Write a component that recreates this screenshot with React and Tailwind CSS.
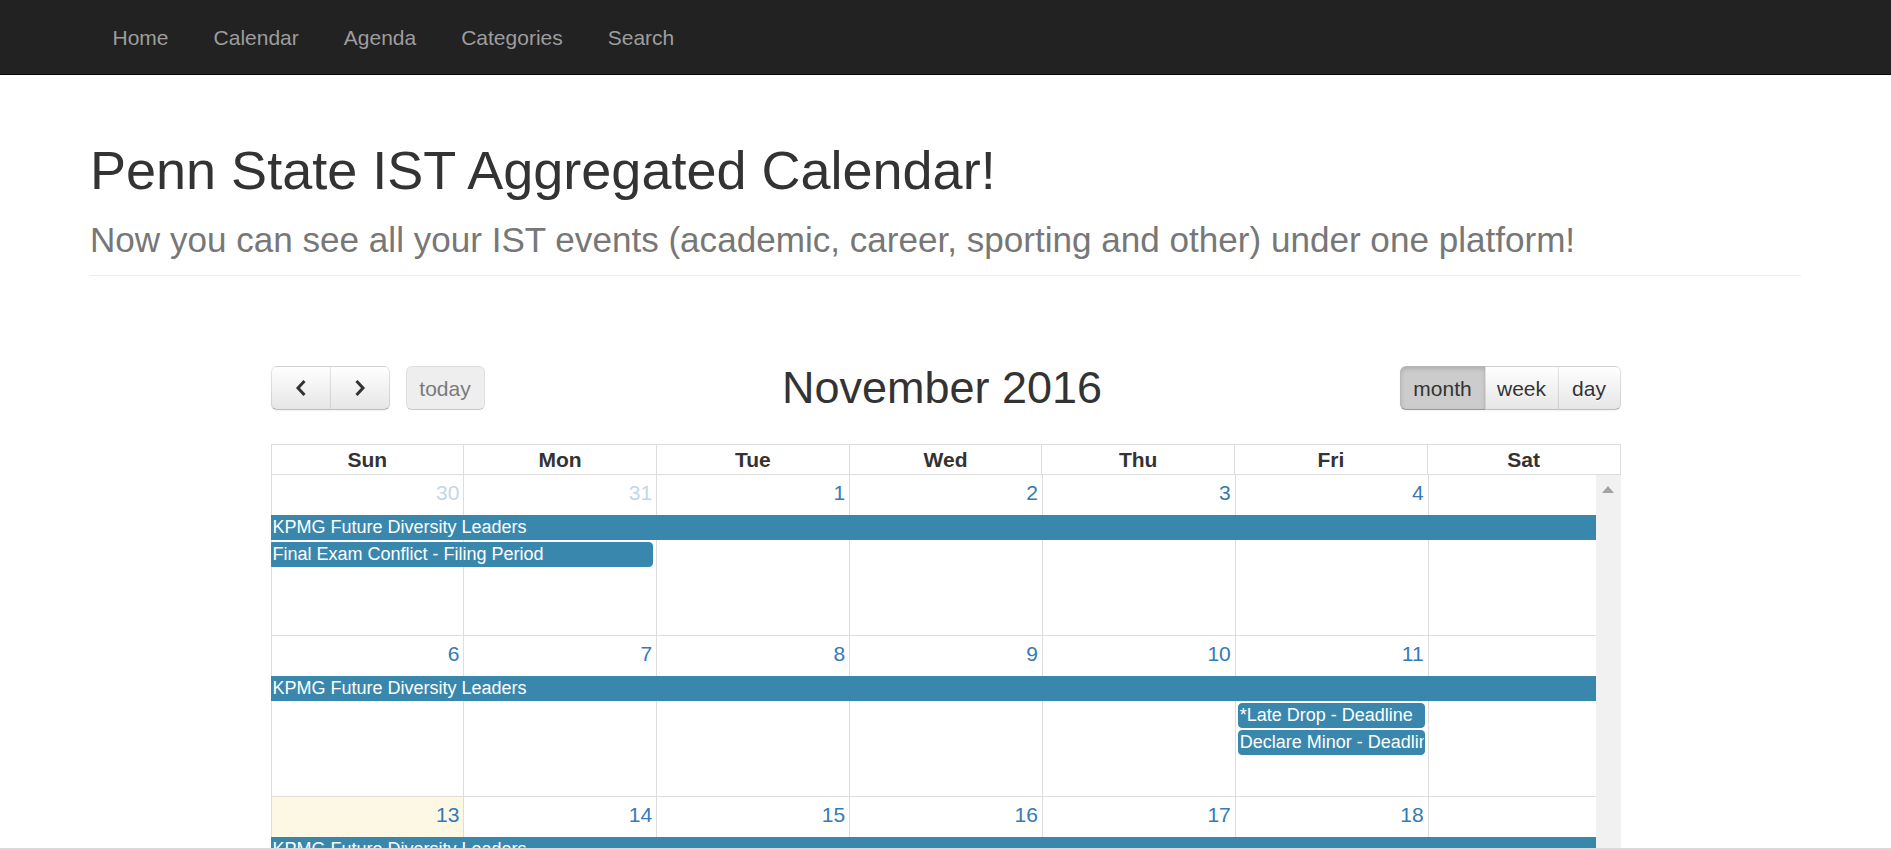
const NAV = ['Home', 'Calendar', 'Agenda', 'Categories', 'Search'];
const DAYS = ['Sun', 'Mon', 'Tue', 'Wed', 'Thu', 'Fri', 'Sat'];

const COL = ['col-start-1', 'col-start-2', 'col-start-3', 'col-start-4', 'col-start-5', 'col-start-6', 'col-start-7'];
const SPAN = ['col-span-1', 'col-span-1', 'col-span-2', 'col-span-3', 'col-span-4', 'col-span-5', 'col-span-6', 'col-span-7'];
const ROW = ['row-start-2', 'row-start-2', 'row-start-3', 'row-start-4'];

// each event: [label, col (1-7), span, row, continuesLeft, continuesRight]
// saturday numbers sit under the scrollbar, so they are left out
const WEEKS = [
  {
    days: [[30, true], [31, true], [1], [2], [3], [4], [null]],
    events: [
      ['KPMG Future Diversity Leaders', 1, 7, 1, true, true],
      ['Final Exam Conflict - Filing Period', 1, 2, 2, true, false],
    ],
  },
  {
    days: [[6], [7], [8], [9], [10], [11], [null]],
    events: [
      ['KPMG Future Diversity Leaders', 1, 7, 1, true, true],
      ['*Late Drop - Deadline', 6, 1, 2, false, false],
      ['Declare Minor - Deadline', 6, 1, 3, false, false],
    ],
  },
  {
    days: [[13, false, true], [14], [15], [16], [17], [18], [null]],
    events: [['KPMG Future Diversity Leaders', 1, 7, 1, true, true]],
  },
  {
    days: [[20], [21], [22], [23], [24], [25], [null]],
    events: [['KPMG Future Diversity Leaders', 1, 7, 1, true, true]],
  },
];

const btnBase =
  'h-[44px] flex items-center justify-center text-[21px] text-[#333] border border-black/10 border-b-black/25';
const btnDefault =
  'bg-linear-to-b from-white to-[#e6e6e6] shadow-[inset_0_1px_0_rgba(255,255,255,0.2),0_1px_2px_rgba(0,0,0,0.05)] [text-shadow:0_1px_1px_rgba(255,255,255,0.75)]';

function Chevron({ dir }) {
  return (
    <svg width="12" height="18" viewBox="0 0 12 18">
      <polyline
        points={dir === 'left' ? '9.5,2 3,9 9.5,16' : '2.5,2 9,9 2.5,16'}
        fill="none"
        stroke="#333"
        strokeWidth="3"
      />
    </svg>
  );
}

function Toolbar() {
  return (
    <div className="flex items-center h-[44px] mb-[34px]">
      <div className="flex">
        <button className={`${btnBase} ${btnDefault} w-[60px] rounded-l-[6px]`}>
          <Chevron dir="left" />
        </button>
        <button className={`${btnBase} ${btnDefault} w-[60px] -ml-px rounded-r-[6px]`}>
          <Chevron dir="right" />
        </button>
        <button className={`${btnBase} ml-[16px] w-[79px] rounded-[6px] bg-[#e6e6e6] opacity-65`}>
          today
        </button>
      </div>
      <h2 className="flex-1 text-center text-[45px] leading-[50px] text-[#333]">November 2016</h2>
      <div className="flex">
        <button className={`${btnBase} w-[86px] rounded-l-[6px] bg-[#cccccc] shadow-[inset_0_2px_4px_rgba(0,0,0,0.15),0_1px_2px_rgba(0,0,0,0.05)]`}>
          month
        </button>
        <button className={`${btnBase} ${btnDefault} w-[74px] -ml-px`}>week</button>
        <button className={`${btnBase} ${btnDefault} w-[63px] -ml-px rounded-r-[6px]`}>day</button>
      </div>
    </div>
  );
}

function Week({ week }) {
  return (
    <div className="grid grid-cols-7 grid-rows-[39px_auto_auto_auto_1fr] h-[161px] border-b border-[#ddd]">
      {week.days.map(([num, other, today], i) => (
        <div
          key={i}
          className={`${COL[i]} row-span-full border-l border-[#ddd] ${today ? 'bg-[#fcf8e3]' : ''}`}
        >
          <div
            className={`text-right pr-[4px] pt-[3px] h-[33px] text-[21px] leading-[30px] text-[#337ab7] ${other ? 'opacity-30' : ''}`}
          >
            {num}
          </div>
        </div>
      ))}
      {week.events.map(([label, col, span, row, contL, contR], i) => (
        <div key={i} className={`${COL[col - 1]} ${SPAN[span]} ${ROW[row]} min-w-0`}>
          <div
            className={`${row === 1 ? 'mt-[1px]' : 'mt-[2px]'} h-[25px] bg-[#3a87ad] border border-[#3a87ad] text-white text-[18px] leading-[23px] px-[1px] overflow-hidden whitespace-nowrap ${
              contL ? '' : 'ml-[3px] rounded-l-[4px]'
            } ${contR ? '' : 'mr-[3px] rounded-r-[4px]'}`}
          >
            {label}
          </div>
        </div>
      ))}
    </div>
  );
}

export default function App() {
  return (
    <div className="h-[850px] overflow-hidden bg-white font-['Liberation_Sans',Arial,sans-serif]">
      <nav className="h-[75px] bg-[#222] border-b border-[#080808]">
        <ul className="flex h-full items-center pl-[90px] pt-[1px]">
          {NAV.map((item) => (
            <li key={item} className="px-[22.5px] text-[21px] text-[#9d9d9d]">
              {item}
            </li>
          ))}
        </ul>
      </nav>

      <div className="mx-[90px] pt-[66px] pb-[15px] border-b border-[#eee]">
        <h1 className="text-[54px] leading-[59.4px] text-[#333]">Penn State IST Aggregated Calendar!</h1>
        <p className="mt-[20px] text-[35.1px] leading-[40px] text-[#777]">
          Now you can see all your IST events (academic, career, sporting and other) under one platform!
        </p>
      </div>

      <div className="w-[1350px] mx-auto mt-[90px]">
        <Toolbar />

        <div className="grid grid-cols-7 border border-[#ddd] border-l-0">
          {DAYS.map((d) => (
            <div key={d} className="border-l border-[#ddd] h-[29px] flex items-center justify-center text-[21px] font-bold text-[#333]">
              {d}
            </div>
          ))}
        </div>

        <div className="flex">
          <div className="w-[1325px] overflow-hidden">
            <div className="w-[1350px]">
              {WEEKS.map((w, i) => (
                <Week key={i} week={w} />
              ))}
            </div>
          </div>
          <div className="w-[25px] bg-[#f1f1f1] flex justify-center pt-[11px]">
            <svg width="12" height="7" viewBox="0 0 12 7">
              <polygon points="0,7 6,0 12,7" fill="#a3a3a3" />
            </svg>
          </div>
        </div>
      </div>

      <div className="fixed left-0 right-0 bottom-0 h-[2px] bg-[#d9d9d9]" />
    </div>
  );
}
